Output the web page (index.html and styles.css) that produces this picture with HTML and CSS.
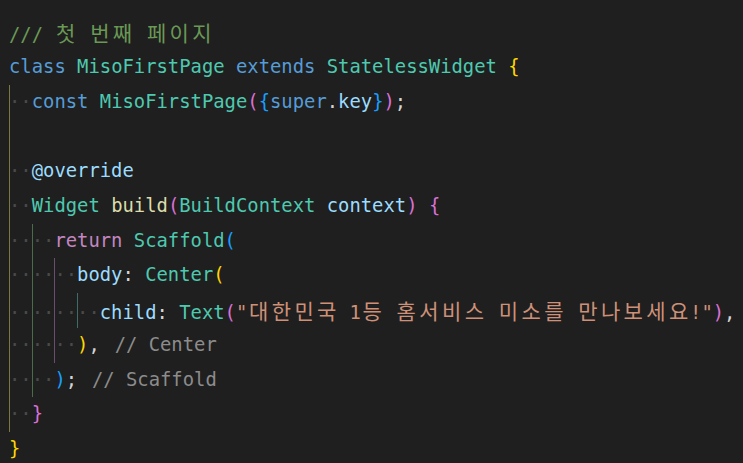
FILE: index.html
```html
<!DOCTYPE html>
<html lang="ko">
<head>
<meta charset="utf-8">
<title>MisoFirstPage</title>
<link rel="stylesheet" href="styles.css">
</head>
<body>
<div class="editor">
  <div class="guide g-olive"></div>
  <div class="guide g-green"></div>
  <div class="guide g-purple"></div>
  <div class="guide g-teal"></div>
<div class="line"><span class="cm">/// <span class="ko">첫</span> <span class="ko">번째</span> <span class="ko">페이지</span></span></div>
<div class="line"><span class="kw">class</span> <span class="ty">MisoFirstPage</span> <span class="kw">extends</span> <span class="ty">StatelessWidget</span> <span class="b1">{</span></div>
<div class="line"><span class="ws">··</span><span class="kw">const</span> <span class="ty">MisoFirstPage</span><span class="b2">(</span><span class="b3">{</span><span class="kw">super</span>.<span class="v">key</span><span class="b3">}</span><span class="b2">)</span>;</div>
<div class="line"></div>
<div class="line"><span class="ws">··</span><span class="v">@override</span></div>
<div class="line"><span class="ws">··</span><span class="ty">Widget</span> <span class="fn">build</span><span class="b2">(</span><span class="ty">BuildContext</span> <span class="v">context</span><span class="b2">)</span> <span class="b2">{</span></div>
<div class="line"><span class="ws">····</span><span class="ctl">return</span> <span class="ty">Scaffold</span><span class="b3">(</span></div>
<div class="line"><span class="ws">······</span><span class="v">body</span>: <span class="ty">Center</span><span class="b1">(</span></div>
<div class="line"><span class="ws">········</span><span class="v">child</span>: <span class="ty">Text</span><span class="b2">(</span><span class="str">"<span class="ko">대한민국</span> 1<span class="ko">등</span> <span class="ko">홈서비스</span> <span class="ko">미소를</span> <span class="ko">만나보세요</span>!"</span><span class="b2">)</span>,</div>
<div class="line"><span class="ws">······</span><span class="b1">)</span>, <span class="lbl">// Center</span></div>
<div class="line"><span class="ws">····</span><span class="b3">)</span>; <span class="lbl">// Scaffold</span></div>
<div class="line"><span class="ws">··</span><span class="b2">}</span></div>
<div class="line"><span class="b1">}</span></div>
</div>
</body>
</html>
```

FILE: styles.css
```css
html, body {
  margin: 0;
  padding: 0;
  background: #1f1f1f;
  overflow: hidden;
}

.editor {
  position: relative;
  padding: 15px 0 0 9px;
  font-family: "DejaVu Sans Mono", "Noto Sans CJK KR", monospace;
  font-size: 18.85px;
  color: #d4d4d4;
}

.line {
  height: 34.75px;
  line-height: 34.75px;
  white-space: pre;
}

.guide {
  position: absolute;
  width: 1px;
}
.g-olive  { left: 9px;    top: 84.5px;   height: 347.5px;  background: #7b7741; }
.g-green  { left: 31.7px; top: 223.5px;  height: 173.75px; background: #4c6b48; }
.g-purple { left: 54.4px; top: 258.25px; height: 104.25px; background: #6b4e6d; }
.g-teal   { left: 77.1px; top: 293px;    height: 34.75px;  background: #3f6b6b; }

.ko {
  font-family: "Noto Sans CJK KR", sans-serif;
  font-size: 21px;
  letter-spacing: 3.38px;
  padding-left: 1.69px;
  margin-right: -1.69px;
}

.ws  { color: #4a4a4a; }
.cm  { color: #6a9955; }
.kw  { color: #569cd6; }
.ty  { color: #4ec9b0; }
.v   { color: #9cdcfe; }
.fn  { color: #dcdcaa; }
.ctl { color: #c586c0; }
.str { color: #ce9178; }
.b1  { color: #ffd700; }
.b2  { color: #da70d6; }
.b3  { color: #179fff; }
.lbl { color: #8c8c8c; margin-left: 3.5px; }
```
